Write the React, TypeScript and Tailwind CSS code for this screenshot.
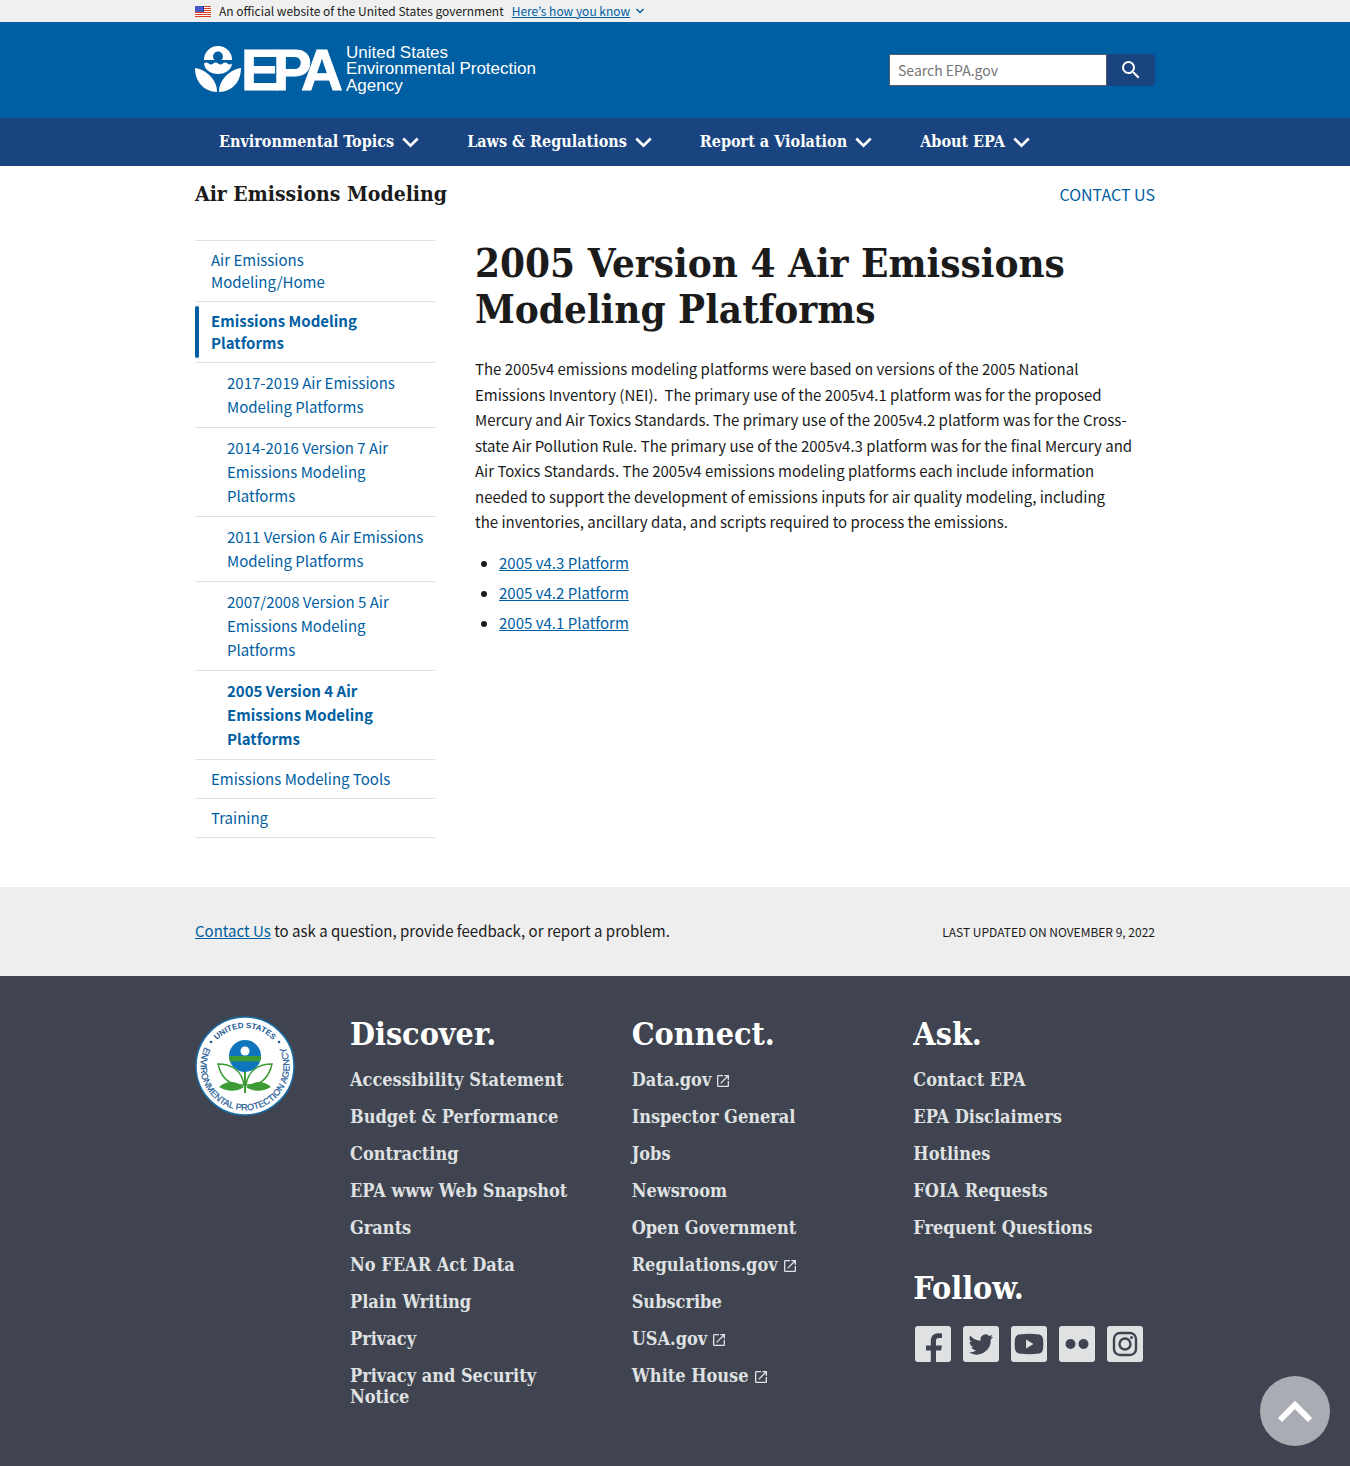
const sans = "font-['Noto_Sans_CJK_KR','Noto_Sans',sans-serif]";
const serif = "font-['DejaVu_Serif_Condensed','DejaVu_Serif',serif]";

const stripes = [0, 2, 4, 6, 8, 10];

function Flag() {
  return (
    <svg className="h-[11px] w-4" viewBox="0 0 16 11" aria-hidden="true">
      <rect width="16" height="11" fill="#fff" />
      {stripes.map((y) => (
        <rect key={y} y={y} width="16" height="1" fill="#db3e1f" />
      ))}
      <rect width="9" height="6" fill="#1e33b1" />
      {[1, 3, 5].map((y) =>
        [1, 3, 5, 7].map((x) => <circle key={`${x}-${y}`} cx={x} cy={y} r="0.5" fill="#fff" />)
      )}
    </svg>
  );
}

function Banner() {
  return (
    <section aria-label="Official website" className="bg-[#f0f0f0]">
      <div className="mx-auto flex h-[22px] max-w-[960px] items-center text-[12px] leading-[22px] text-[#1b1b1b]">
        <Flag />
        <span className="ml-2">An official website of the United States government</span>
        <button type="button" className="ml-2 flex items-center gap-1 text-[#005ea2]">
          <span className="underline">Here’s how you know</span>
          <svg className="h-[6px] w-3" viewBox="0 0 12 6" fill="none" stroke="currentColor" strokeWidth="1.5" aria-hidden="true">
            <path d="M2.5 1 6 4.5 9.500 1" />
          </svg>
        </button>
      </div>
    </section>
  );
}

function Logo() {
  return (
    <a href="#home" aria-label="US EPA">
      <svg className="h-[72px] w-[360px]" viewBox="0 -10 360 72" fill="#fff" aria-hidden="true">
        <path d="M9 16A14 14 0 0 1 37 16H26.500A5 5 0 1 0 19.500 16Z" />
        <path d="M9 19.500q2.300-1.800 4.700 0t4.700 0 4.700 0 4.700 0 4.700 0 4.500 0C36.500 25.500 30.500 30 23 30S9.500 25.500 9 19.500Z" />
        <path d="M0 24C7 25 13 29 17 34C20 38 22 42 22 48C9 47.500 0 38 0 24Z" />
        <path d="M46 24C39 25 33 29 29 34C26 38 24 42 24 48C37 47.500 46 38 46 24Z" />
        <text x="46 78 106" y="46" fontSize="58" fontWeight="700" stroke="#fff" strokeWidth="1" fontFamily="'Liberation Sans',sans-serif">EPA</text>
        <g fontSize="17" fontFamily="'Liberation Sans',sans-serif">
          <text x="151" y="14">United States</text>
          <text x="151" y="30">Environmental Protection</text>
          <text x="151" y="47">Agency</text>
        </g>
      </svg>
    </a>
  );
}

function Header() {
  return (
    <header>
      <div className="bg-[#005ea2]">
        <div className="mx-auto flex h-24 max-w-[960px] items-center justify-between">
          <Logo />
          <form role="search" className="flex h-8" onSubmit={(e) => e.preventDefault()}>
            <input
              type="search"
              aria-label="Search EPA.gov"
              placeholder="Search EPA.gov"
              className="w-[218px] border border-[#565c65] bg-white px-2 text-[14px] text-[#1b1b1b] placeholder:text-[#757575]"
            />
            <button type="submit" aria-label="Search" className="flex w-12 items-center justify-center rounded-r bg-[#1a4480] text-white">
              <svg className="size-6" viewBox="0 0 24 24" fill="currentColor" aria-hidden="true">
                <path d="M15.500 14h-.79l-.28-.27A6.470 6.470 0 0 0 16 9.500 6.500 6.500 0 1 0 9.500 16c1.610 0 3.090-.59 4.230-1.570l.27.28v.79l5 4.990L20.490 19l-4.990-5zm-6 0C7.010 14 5 11.990 5 9.500S7.010 5 9.500 5 14 7.010 14 9.500 11.990 14 9.500 14z" />
              </svg>
            </button>
          </form>
        </div>
      </div>
      <nav aria-label="Primary" className="bg-[#1a4480]">
        <ul className="mx-auto flex h-12 max-w-[960px] items-center gap-12 px-6">
          {["Environmental Topics", "Laws & Regulations", "Report a Violation", "About EPA"].map((label) => (
            <li key={label}>
              <button type="button" className={`${serif} flex items-center gap-2 text-[16px] font-bold text-white`}>
                {label}
                <svg className="h-[11px] w-[17px]" viewBox="0 0 16 10" fill="none" stroke="currentColor" strokeWidth="2.500" aria-hidden="true">
                  <path d="m1.200 1.200 6.800 6.800 6.800-6.800" />
                </svg>
              </button>
            </li>
          ))}
        </ul>
      </nav>
    </header>
  );
}

const subItems = [
  "2017-2019 Air Emissions Modeling Platforms",
  "2014-2016 Version 7 Air Emissions Modeling Platforms",
  "2011 Version 6 Air Emissions Modeling Platforms",
  "2007/2008 Version 5 Air Emissions Modeling Platforms",
  "2005 Version 4 Air Emissions Modeling Platforms",
];

const topLink = "block px-4 py-2 text-[15px] leading-[22px]";

function SideNav() {
  return (
    <nav aria-label="Side navigation" className="w-60 shrink-0 text-[#005ea2]">
      <ul className="divide-y divide-[#dfe1e2] border-y border-[#dfe1e2]">
        <li><a href="#home" className={topLink}>Air Emissions Modeling/Home</a></li>
        <li>
          <a href="#platforms" className={`${topLink} relative font-bold before:absolute before:inset-y-1 before:left-0 before:w-1 before:rounded-full before:bg-[#005ea2]`}>
            Emissions Modeling Platforms
          </a>
          <ul className="divide-y divide-[#dfe1e2] border-t border-[#dfe1e2]">
            {subItems.map((item, i) => (
              <li key={item}>
                <a
                  href="#sub"
                  aria-current={i === 4 ? "page" : undefined}
                  className="block py-2 pr-2 pl-8 text-[15px] leading-6 aria-[current]:font-bold"
                >
                  {item}
                </a>
              </li>
            ))}
          </ul>
        </li>
        <li><a href="#tools" className={topLink}>Emissions Modeling Tools</a></li>
        <li><a href="#training" className={topLink}>Training</a></li>
      </ul>
    </nav>
  );
}

function Content() {
  return (
    <div className="mx-auto max-w-[960px] pb-[49px]">
      <div className="flex h-[74px] items-start justify-between pt-[14px] leading-7">
        <h2 className={`${serif} text-[21px] font-bold`}>Air Emissions Modeling</h2>
        <a href="#contact" className="text-[16px] text-[#005ea2] uppercase">Contact Us</a>
      </div>
      <div className="flex gap-10">
        <SideNav />
        <main className="min-w-0 flex-1">
          <h1 className={`${serif} text-[40px] leading-[46px] font-bold`}>
            2005 Version 4 Air Emissions Modeling Platforms
          </h1>
          <p className="mt-6 pr-[14px] text-[15px] leading-[1.7]">
            The 2005v4 emissions modeling platforms were based on versions of the 2005 National Emissions Inventory
            (NEI).&nbsp; The primary use of the 2005v4.1 platform was for the proposed Mercury and Air Toxics
            Standards. The primary use of the 2005v4.2 platform was for the Cross-state Air Pollution Rule. The
            primary use of the 2005v4.3 platform was for the final Mercury and Air Toxics Standards. The 2005v4
            emissions modeling platforms each include information needed to support the development of emissions
            inputs for air quality modeling, including the&nbsp;inventories, ancillary data, and scripts required to
            process the emissions.
          </p>
          <ul className="mt-[13px] list-disc pl-6 text-[15px] leading-[30px]">
            {["2005 v4.3 Platform", "2005 v4.2 Platform", "2005 v4.1 Platform"].map((t) => (
              <li key={t}><a href="#platform" className="text-[#005ea2] underline">{t}</a></li>
            ))}
          </ul>
        </main>
      </div>
    </div>
  );
}

function Seal() {
  return (
    <svg className="size-[100px]" viewBox="0 0 100 100" role="img" aria-label="EPA seal">
      <defs>
        <path id="arc-top" d="M12 50a38 38 0 0 1 76 0" />
        <path id="arc-bottom" d="M9.500 31.500A44.500 44.500 0 1 0 90.500 31.500" />
      </defs>
      <circle cx="50" cy="50" r="49" fill="#fff" stroke="#1a6ea8" strokeWidth="1.500" />
      <g fill="#1c5a96" fontFamily="'Liberation Sans',sans-serif" fontWeight="700" fontSize="8" textAnchor="middle">
        <text><textPath href="#arc-top" startOffset="50%">UNITED STATES</textPath></text>
        <text fontSize="9" fontWeight="400" stroke="#1c5a96" strokeWidth="0.200"><textPath href="#arc-bottom" startOffset="50%">ENVIRONMENTAL PROTECTION AGENCY</textPath></text>
      </g>
      <circle cx="16" cy="26" r="1.300" fill="#1c5a96" />
      <circle cx="84" cy="26" r="1.300" fill="#1c5a96" />
      <circle cx="50" cy="40" r="16" fill="#0f75bd" />
      <path d="M34 40H66Q65.800 43 65 45.500H35Q34.200 43 34 40Z" fill="#3d9b35" />
      <circle cx="50" cy="35" r="4.500" fill="#fff" />
      <g fill="none" stroke="#3d9b35" strokeWidth="1.500">
        <path d="M49 69C47 55 37 48 23 48C26 61 34 70 49 69Z" />
        <path d="M51 69C53 55 63 48 77 48C74 61 66 70 51 69Z" />
        <path d="M50 56V77" strokeWidth="2" />
      </g>
      <path d="M24 71C32 64 41 65 49 71C40 77 31 75 24 71Z" fill="#3d9b35" />
      <path d="M76 71C68 64 59 65 51 71C60 77 69 75 76 71Z" fill="#3d9b35" />
    </svg>
  );
}

function External() {
  return (
    <svg className="ml-1 inline size-4" viewBox="0 0 24 24" fill="currentColor" aria-hidden="true">
      <path d="M19 19H5V5h7V3H5a2 2 0 0 0-2 2v14a2 2 0 0 0 2 2h14c1.100 0 2-.9 2-2v-7h-2v7zM14 3v2h3.590l-9.830 9.830 1.410 1.410L19 6.410V10h2V3h-7z" />
    </svg>
  );
}

function FooterList({ title, items, external = [] }: { title: string; items: string[]; external?: string[] }) {
  return (
    <section>
      <h2 className={`${serif} text-[32px] leading-9 font-bold text-white`}>{title}</h2>
      <ul className={`${serif} mt-[9px] text-[18px] leading-[21px] font-bold text-[#dfe1e2]`}>
        {items.map((item) => (
          <li key={item} className="py-2">
            <a href="#link">{item}{external.includes(item) && <External />}</a>
          </li>
        ))}
      </ul>
    </section>
  );
}

const social = [
  {
    name: "Facebook",
    art: <path d="M15.800 36V24.400H11V19.500h4.800V15c0-5 3-7.800 7.300-7.800 1.500 0 3 .2 3.900.4v4.300h-3c-2.300 0-3 1.300-3 3v4.600h6l-1 4.900h-5V36Z" />,
  },
  {
    name: "Twitter",
    art: <path d="M30 11.200a9 9 0 0 1-2.600.8 4.700 4.700 0 0 0 2-2.600 9 9 0 0 1-3 1.200 4.700 4.700 0 0 0-8 4.300A13.300 13.300 0 0 1 8.700 10a4.700 4.700 0 0 0 1.500 6.300 4.600 4.600 0 0 1-2.100-.6 4.700 4.700 0 0 0 3.800 4.700 5 5 0 0 1-2.100.1 4.700 4.700 0 0 0 4.400 3.200A9.500 9.500 0 0 1 7.200 25.700a13.300 13.300 0 0 0 20.500-11.900 9.500 9.500 0 0 0 2.300-2.600Z" transform="translate(-2.200 -1.400) scale(1.080)" />,
  },
  {
    name: "YouTube",
    art: <path fillRule="evenodd" d="M8 8.500Q18 7 28 8.500 31.500 9 32 13q.6 5 0 10-.5 4-4 4.500-10 1.500-20 0Q4.500 27 4 23q-.6-5 0-10 .5-4 4-4.500ZM15 13.500v9l7.500-4.500Z" />,
  },
  { name: "Flickr", art: <><circle cx="11.500" cy="18" r="5" /><circle cx="24.500" cy="18" r="5" /></> },
  {
    name: "Instagram",
    art: (
      <>
        <rect x="7" y="7" width="22" height="22" rx="6" fill="none" stroke="currentColor" strokeWidth="2.400" />
        <circle cx="18" cy="18" r="5.500" fill="none" stroke="currentColor" strokeWidth="2.400" />
        <circle cx="24.500" cy="11.500" r="1.500" />
      </>
    ),
  },
];

function Footer() {
  return (
    <footer>
      <div className="bg-[#eeeeee]">
        <div className="mx-auto flex h-[89px] max-w-[960px] items-center justify-between">
          <p className="text-[15px]">
            <a href="#contact" className="text-[#005ea2] underline">Contact Us</a> to ask a question, provide feedback, or report a problem.
          </p>
          <p className="text-[12px] uppercase">Last updated on November 9, 2022</p>
        </div>
      </div>
      <div className="bg-[#3f4450] pt-10 pb-[51px]">
        <div className="mx-auto flex max-w-[960px]">
          <div className="mr-[55px] shrink-0"><Seal /></div>
          <div className="grid flex-1 grid-cols-3 gap-10">
            <FooterList
              title="Discover."
              items={["Accessibility Statement", "Budget & Performance", "Contracting", "EPA www Web Snapshot", "Grants", "No FEAR Act Data", "Plain Writing", "Privacy", "Privacy and Security Notice"]}
            />
            <FooterList
              title="Connect."
              items={["Data.gov", "Inspector General", "Jobs", "Newsroom", "Open Government", "Regulations.gov", "Subscribe", "USA.gov", "White House"]}
              external={["Data.gov", "Regulations.gov", "USA.gov", "White House"]}
            />
            <div>
              <FooterList title="Ask." items={["Contact EPA", "EPA Disclaimers", "Hotlines", "FOIA Requests", "Frequent Questions"]} />
              <h2 className={`${serif} mt-6 text-[32px] leading-9 font-bold text-white`}>Follow.</h2>
              <ul className="mt-5 ml-[2px] flex gap-3">
                {social.map(({ name, art }) => (
                  <li key={name}>
                    <a href="#social" aria-label={name}>
                      <svg className="size-9 rounded-[3px] bg-[#dfe1e2] text-[#3f4450]" viewBox="0 0 36 36" fill="currentColor" aria-hidden="true">{art}</svg>
                    </a>
                  </li>
                ))}
              </ul>
            </div>
          </div>
        </div>
      </div>
    </footer>
  );
}

export default function App() {
  return (
    <div lang="en" className={`${sans} bg-white text-[#1b1b1b]`}>
      <Banner />
      <Header />
      <Content />
      <Footer />
      <a href="#top" aria-label="Back to top" className="fixed right-5 bottom-5 flex size-[70px] items-center justify-center rounded-full bg-[#a9adb3] text-white">
        <svg className="h-6 w-9" viewBox="0 0 36 24" fill="none" stroke="currentColor" strokeWidth="6" aria-hidden="true">
          <path d="M3 21 18 6 33 21" />
        </svg>
      </a>
    </div>
  );
}
